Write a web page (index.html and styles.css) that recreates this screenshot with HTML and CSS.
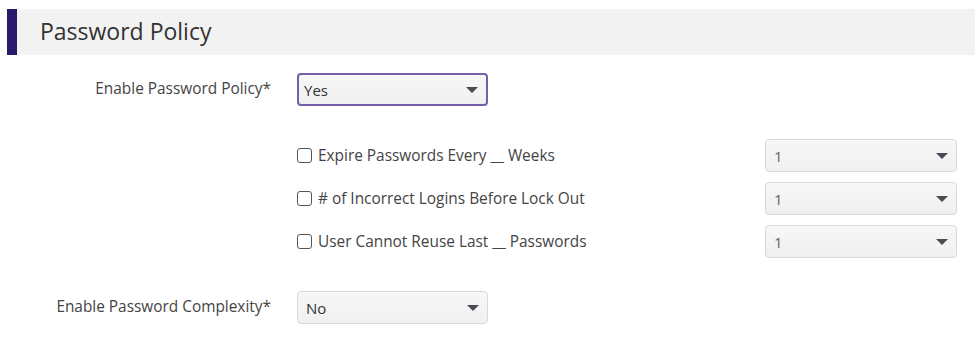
FILE: index.html
```html
<!DOCTYPE html>
<html>
<head>
<meta charset="utf-8">
<link rel="stylesheet" href="styles.css">
</head>
<body>
<div class="header"><h1 class="title">Password Policy</h1></div>
<div class="form">
  <div class="row row-main">
    <label class="label">Enable Password Policy*</label>
    <div class="select select-active"><span>Yes</span><i class="caret"></i></div>
  </div>
  <div class="group">
    <div class="row row-check">
      <div class="spacer"></div>
      <div class="check-line">
        <label class="check"><span class="box"></span>Expire Passwords Every __ Weeks</label>
        <div class="select select-wide"><span class="val">1</span><i class="caret"></i></div>
      </div>
    </div>
    <div class="row row-check">
      <div class="spacer"></div>
      <div class="check-line">
        <label class="check"><span class="box"></span># of Incorrect Logins Before Lock Out</label>
        <div class="select select-wide"><span class="val">1</span><i class="caret"></i></div>
      </div>
    </div>
    <div class="row row-check">
      <div class="spacer"></div>
      <div class="check-line">
        <label class="check"><span class="box"></span>User Cannot Reuse Last __ Passwords</label>
        <div class="select select-wide"><span class="val">1</span><i class="caret"></i></div>
      </div>
    </div>
  </div>
  <div class="row row-main">
    <label class="label">Enable Password Complexity*</label>
    <div class="select"><span>No</span><i class="caret"></i></div>
  </div>
</div>
</body>
</html>
```
FILE: styles.css
```css
html, body {
  margin: 0;
  padding: 0;
  background: #fff;
  font-family: "Open Sans", "Noto Sans", sans-serif;
  color: #444;
}
.header {
  margin: 9px 0 0 7px;
  height: 46px;
  background: #f2f2f2;
  border-left: 10px solid #2b1a6b;
  display: flex;
  align-items: center;
  box-sizing: border-box;
}
.title {
  margin: -2px 0 0 23px;
  font-size: 23px;
  font-weight: 400;
  color: #333;
  line-height: 1;
}
.form {
  padding-top: 18px;
}
.row {
  display: grid;
  grid-template-columns: 271px 660px;
  column-gap: 26px;
  align-items: center;
}
.label {
  text-align: right;
  font-size: 15.4px;
  color: #444;
  margin-top: -2px;
}
.group {
  margin-top: 33px;
  margin-bottom: 33px;
  display: flex;
  flex-direction: column;
  gap: 10px;
}
.check-line {
  display: flex;
  align-items: center;
  justify-content: space-between;
}
.check {
  display: flex;
  align-items: center;
  font-size: 15.4px;
  color: #444;
}
.box {
  width: 15px;
  height: 15px;
  border: 1px solid #555;
  border-radius: 3px;
  box-sizing: border-box;
  margin-right: 6px;
  background: #fff;
}
.select {
  width: 191px;
  height: 33px;
  box-sizing: border-box;
  border: 1px solid #d9d9d9;
  border-radius: 4px;
  background: linear-gradient(#f7f7f7, #f0f0f0);
  display: flex;
  align-items: center;
  justify-content: space-between;
  padding: 0 8px 0 8px;
  font-size: 15px;
  color: #333;
}
.select-active {
  border: 2px solid #7560a8;
  padding-left: 5px;
}
.select-wide {
  width: 192px;
  height: 33px;
}
.val {
  color: #666;
}
.caret {
  width: 0;
  height: 0;
  border-left: 6px solid transparent;
  border-right: 6px solid transparent;
  border-top: 6px solid #4a4a55;
}
```
